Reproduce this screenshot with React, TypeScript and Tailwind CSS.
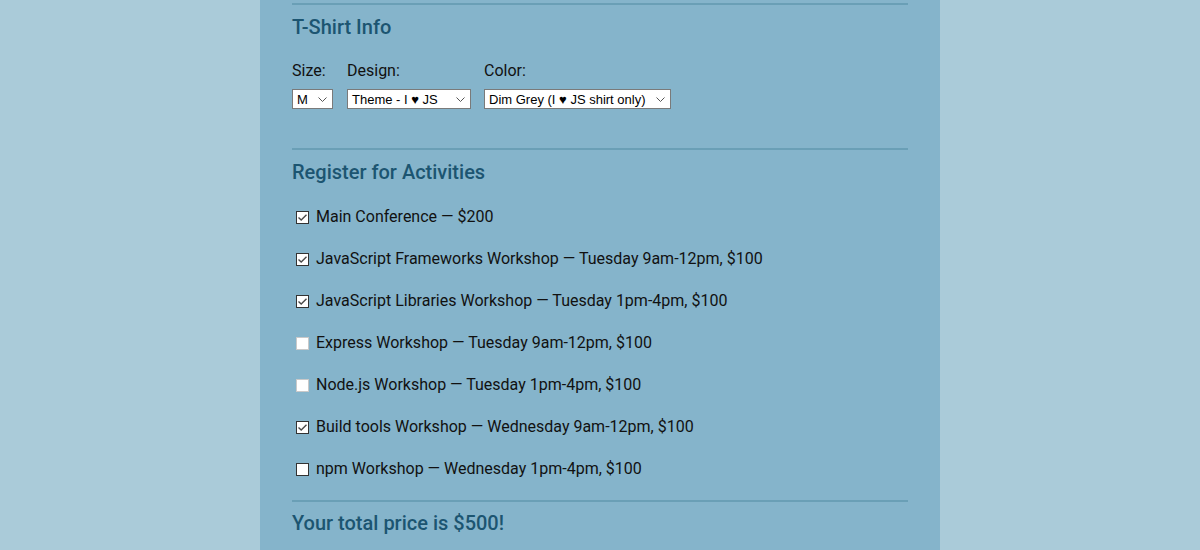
import React from 'react'

const activities = [
    { label: 'Main Conference — $200', state: 'checked' },
    { label: 'JavaScript Frameworks Workshop — Tuesday 9am-12pm, $100', state: 'checked' },
    { label: 'JavaScript Libraries Workshop — Tuesday 1pm-4pm, $100', state: 'checked' },
    { label: 'Express Workshop — Tuesday 9am-12pm, $100', state: 'disabled' },
    { label: 'Node.js Workshop — Tuesday 1pm-4pm, $100', state: 'disabled' },
    { label: 'Build tools Workshop — Wednesday 9am-12pm, $100', state: 'checked' },
    { label: 'npm Workshop — Wednesday 1pm-4pm, $100', state: 'unchecked' },
]

const Chevron = () => (
    <svg className="absolute right-[6px] top-[8px] pointer-events-none" width="9" height="6" viewBox="0 0 9 6">
        <path d="M0.5 0.5 L4.5 4.5 L8.5 0.5" fill="none" stroke="#555" strokeWidth="1" />
    </svg>
)

const Select = ({ width, value }: { width: string; value: string }) => (
    <div className={`relative ${width} h-[20px]`}>
        <div className="h-[20px] w-full bg-white border border-[#7a7a7a] pl-[4px] text-[13px] leading-[19px] text-black font-['Liberation_Sans',sans-serif] whitespace-nowrap overflow-hidden">
            {value}
        </div>
        <Chevron />
    </div>
)

const Box = ({ state }: { state: string }) => {
    if (state === 'disabled') {
        return <span className="ml-[4px] w-[13px] h-[13px] bg-white border border-[#c9c9c9] shrink-0" />
    }
    return (
        <span className="ml-[4px] w-[13px] h-[13px] bg-white border border-[#333] shrink-0 flex items-center justify-center">
            {state === 'checked' && (
                <svg width="9" height="7" viewBox="0 0 9 7">
                    <path d="M0.5 3.5 L3.2 6 L8.5 0.8" fill="none" stroke="#4a4a4a" strokeWidth="1.4" />
                </svg>
            )}
        </span>
    )
}

const App = () => {
    return (
        <div className="min-h-screen bg-[#aacbd9] flex justify-center font-['Roboto',sans-serif]">
            <div className="w-[680px] h-[550px] overflow-hidden bg-[#85b4cb] px-8">
                <div className="mt-[3px] h-[2px] bg-[#6a9fb6]" />
                <h2 className="mt-[10px] text-[20px] leading-[24px] font-medium text-[#1c5571]">T-Shirt Info</h2>
                <div className="mt-[20px] flex text-[16px] leading-[24px] text-[#111]">
                    <div className="flex flex-col">
                        <span>Size:</span>
                        <div className="mt-[6px]"><Select width="w-[41px]" value="M" /></div>
                    </div>
                    <div className="flex flex-col ml-[14px]">
                        <span>Design:</span>
                        <div className="mt-[6px]"><Select width="w-[124px]" value="Theme - I ♥ JS" /></div>
                    </div>
                    <div className="flex flex-col ml-[13px]">
                        <span>Color:</span>
                        <div className="mt-[6px]"><Select width="w-[187px]" value="Dim Grey (I ♥ JS shirt only)" /></div>
                    </div>
                </div>
                <div className="mt-[39px] h-[2px] bg-[#6a9fb6]" />
                <h2 className="mt-[10px] text-[20px] leading-[24px] font-medium text-[#1c5571]">Register for Activities</h2>
                <div className="mt-[21px] flex flex-col gap-[18px]">
                    {activities.map((a) => (
                        <label key={a.label} className="flex items-center h-[24px] text-[16px] text-[#111]">
                            <Box state={a.state} />
                            <span className="ml-[7px]">{a.label}</span>
                        </label>
                    ))}
                </div>
                <div className="mt-[19px] h-[2px] bg-[#6a9fb6]" />
                <h2 className="mt-[9px] text-[20px] leading-[24px] font-medium text-[#1c5571]">Your total price is $500!</h2>
            </div>
        </div>
    )
}

export default App
